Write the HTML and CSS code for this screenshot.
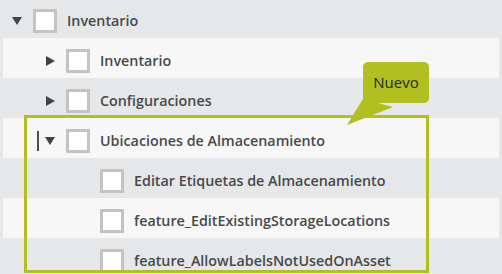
FILE: index.html
```html
<!DOCTYPE html>
<html lang="es">
<head>
    <meta charset="UTF-8">
    <title>Permisos - Inventario</title>
    <link rel="stylesheet" href="styles.css">
</head>
<body>
    <div class="tree">
        <div class="node level-0">
            <span class="toggle open"></span>
            <span class="check"></span>
            <span class="label">Inventario</span>
        </div>
        <div class="node level-1 alt">
            <span class="toggle"></span>
            <span class="check"></span>
            <span class="label">Inventario</span>
        </div>
        <div class="node level-1">
            <span class="toggle"></span>
            <span class="check"></span>
            <span class="label">Configuraciones</span>
        </div>
        <div class="node level-1 alt">
            <span class="caret"></span>
            <span class="toggle open"></span>
            <span class="check"></span>
            <span class="label">Ubicaciones de Almacenamiento</span>
        </div>
        <div class="node level-2">
            <span class="check"></span>
            <span class="label">Editar Etiquetas de Almacenamiento</span>
        </div>
        <div class="node level-2 alt">
            <span class="check"></span>
            <span class="label">feature_EditExistingStorageLocations</span>
        </div>
        <div class="node level-2">
            <span class="check"></span>
            <span class="label">feature_AllowLabelsNotUsedOnAsset</span>
        </div>

        <!-- tour highlight for the new section -->
        <div class="highlight"></div>
        <div class="tour-tip">
            <svg class="tip-tail" width="50" height="30" viewBox="0 0 50 30">
                <polygon points="16,0 46,8 0,26" fill="#b2bf20"/>
            </svg>
            <span class="tip-text">Nuevo</span>
        </div>
    </div>
</body>
</html>
```

FILE: styles.css
```css
body {
    margin: 0;
    background: #e6e7e8;
    font-family: "Open Sans", "DejaVu Sans", sans-serif;
    overflow: hidden;
}
.tree {
    position: relative;
    margin-top: -2px;
}
.node {
    display: flex;
    align-items: center;
    height: 40px;
    margin: 0 3px;
    padding-top: 5px;
    box-sizing: border-box;
}
.node.alt {
    background: #f7f7f7;
}
.level-0 { padding-left: 9px; }
.level-1 { padding-left: 42px; }
.level-2 { padding-left: 97px; }
.toggle {
    width: 21px;
    display: flex;
    align-items: center;
}
.toggle::before {
    content: "";
    width: 0;
    height: 0;
    margin-left: 1px;
    border-left: 9px solid #3f4247;
    border-top: 5px solid transparent;
    border-bottom: 5px solid transparent;
}
.toggle.open::before {
    margin-left: 0;
    border-left: 5px solid transparent;
    border-right: 5px solid transparent;
    border-top: 8px solid #3f4247;
    border-bottom: 0;
}
.caret {
    width: 2px;
    height: 20px;
    background: #4a4d52;
    margin-left: -8px;
    margin-right: 6px;
}
.check {
    width: 24px;
    height: 24px;
    box-sizing: border-box;
    border: 3px solid #c3c3c3;
    background: #fff;
    margin-right: 10px;
    flex-shrink: 0;
}
.label {
    font-size: 14.3px;
    font-weight: 600;
    color: #47494c;
    white-space: nowrap;
}
.highlight {
    position: absolute;
    left: 24px;
    top: 117px;
    width: 405px;
    height: 158px;
    box-sizing: border-box;
    border: 3px solid #b2bf20;
    pointer-events: none;
}
.tour-tip {
    position: absolute;
    left: 363px;
    top: 64px;
}
.tip-text {
    display: block;
    position: relative;
    width: 66px;
    height: 41px;
    line-height: 40px;
    text-align: center;
    background: #b2bf20;
    border-radius: 5px;
    font-size: 15px;
    color: #262814;
}
.tip-tail {
    position: absolute;
    left: -16px;
    top: 37px;
}
```
